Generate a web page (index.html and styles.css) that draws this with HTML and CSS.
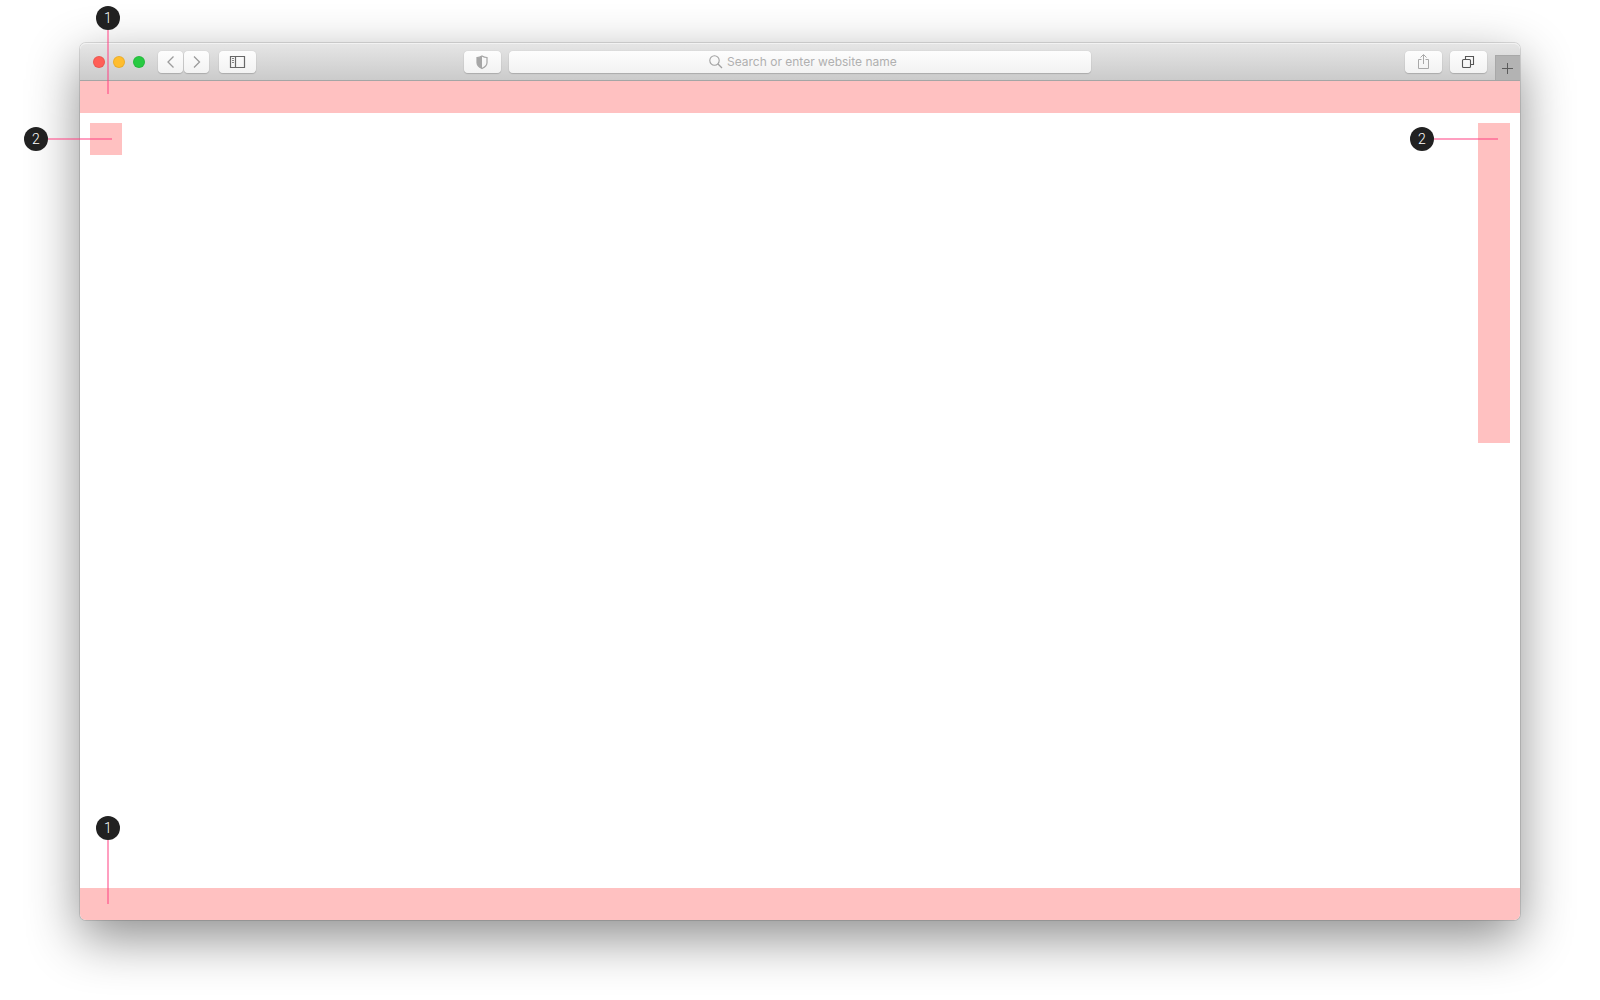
FILE: index.html
```html
<!DOCTYPE html>
<html lang="en">
<head>
<meta charset="utf-8">
<meta name="viewport" content="width=device-width, initial-scale=1">
<title>Browser layout regions</title>
<link rel="stylesheet" href="styles.css">
</head>
<body>
<main class="window">
  <header class="toolbar">
    <div class="side">
      <div class="lights"><span class="light close"></span><span class="light minimize"></span><span class="light zoom"></span></div>
      <div class="nav">
        <button class="btn nav-btn" type="button" aria-label="Back"><svg width="25" height="22" viewBox="0 0 25 22"><path d="M15.500 5.500 10 11l5.500 5.500" stroke="#9b9b9b" stroke-width="1.300"/></svg></button>
        <button class="btn nav-btn" type="button" aria-label="Forward"><svg width="25" height="22" viewBox="0 0 25 22"><path d="M10 5.500 15.500 11 10 16.500" stroke="#9b9b9b" stroke-width="1.300"/></svg></button>
      </div>
      <button class="btn" type="button" aria-label="Show sidebar"><svg width="37" height="22" viewBox="0 0 37 22"><path d="M11.500 5.500h14v11h-14zM16.500 5.500v11" stroke="#686868" stroke-width="1.200"/><path d="M13 7.500h2M13 9.500h2M13 11.500h2" stroke="#858585"/></svg></button>
      <button class="btn shield" type="button" aria-label="Privacy report"><svg width="37" height="22" viewBox="0 0 37 22"><path d="M18 5c1.500 1 3.200 1.500 5 1.500v5.200c0 2.700-2 4.300-5 5.800-3-1.500-5-3.100-5-5.800V6.500c1.800 0 3.500-.5 5-1.500z" stroke="#a6a6a6" stroke-width="1.200"/><path d="M18 5v12.500c-3-1.500-5-3.100-5-5.800V6.500c1.800 0 3.500-.5 5-1.500z" fill="#a6a6a6"/></svg></button>
    </div>
    <label class="address">
      <svg width="14" height="14" viewBox="0 0 14 14"><circle cx="5.500" cy="5.500" r="4.700" stroke="#a0a0a0" stroke-width="1.100"/><path d="m9 9 4 4" stroke="#a0a0a0" stroke-width="1.300"/></svg>
      <input class="address-input" type="text" placeholder="Search or enter website name" aria-label="Address">
    </label>
    <div class="side actions">
      <button class="btn" type="button" aria-label="Share"><svg width="37" height="22" viewBox="0 0 37 22"><path d="M16.500 8.500h-3v9h10v-9h-3M18.500 13V4M15.500 6.500l3-3 3 3" stroke="#a9a9a9"/></svg></button>
      <button class="btn" type="button" aria-label="Show all tabs"><svg width="37" height="22" viewBox="0 0 37 22"><path d="M13.500 8.500h6a1 1 0 0 1 1 1v6a1 1 0 0 1-1 1h-6a1 1 0 0 1-1-1v-6a1 1 0 0 1 1-1zM15.500 8.500v-3h8v8h-3" stroke="#555" stroke-width="1.100"/></svg></button>
      <button class="new-tab" type="button" aria-label="New tab"><svg width="25" height="25" viewBox="0 0 25 25"><path d="M12.500 8v11M7 13.500h11" stroke="#5c5c5c"/></svg></button>
    </div>
  </header>
  <div class="band"></div>
  <section class="content">
    <div class="region square"></div>
    <div class="region rail"></div>
  </section>
  <div class="band bottom"></div>

  <div class="marker vertical at-top"><span class="badge">1</span><span class="line"></span></div>
  <div class="marker at-left"><span class="badge">2</span><span class="line"></span></div>
  <div class="marker at-right"><span class="badge">2</span><span class="line"></span></div>
  <div class="marker vertical at-bottom"><span class="badge">1</span><span class="line"></span></div>
</main>
</body>
</html>
```
FILE: styles.css
```css
* { box-sizing: border-box; }
body {
  margin: 0;
  min-height: 100vh;
  padding: 43px 80px 80px;
  display: flex;
  flex-direction: column;
  background: #fff;
  font-family: Inter, "Liberation Sans", sans-serif;
}
svg { display: block; fill: none; flex: none; }
.window {
  position: relative;
  flex: 1;
  display: flex;
  flex-direction: column;
  background: #fff;
  border-radius: 6px;
  box-shadow: 0 0 0 1px rgba(0, 0, 0, .12), 0 18px 52px rgba(0, 0, 0, .45);
}
.toolbar {
  height: 38px;
  padding-top: 1px;
  display: grid;
  grid-template-columns: 1fr minmax(0, 582px) 1fr;
  align-items: center;
  background: linear-gradient(#e6e6e6, #cbcbcb);
  border-bottom: 1px solid #a5a5a5;
  border-radius: 6px 6px 0 0;
  box-shadow: inset 0 1px #f2f2f2;
}
.side { display: flex; align-items: center; height: 36px; padding-left: 13px; }
.lights { display: flex; gap: 8px; margin-right: 13px; }
.light { width: 12px; height: 12px; border-radius: 50%; border: 1px solid rgba(0, 0, 0, .08); }
.close { background: #ff5f57; }
.minimize { background: #ffbd2e; }
.zoom { background: #28ca42; }
.nav { display: flex; gap: 1px; margin-right: 10px; }
.btn {
  width: 37px;
  height: 22px;
  padding: 0;
  border: 0;
  border-radius: 4px;
  background: linear-gradient(#fdfdfd, #f2f2f2);
  box-shadow: 0 0 1px rgba(0, 0, 0, .2), 0 1px 1px rgba(0, 0, 0, .16);
}
.nav-btn { width: 25px; }
.shield { margin: 0 8px 0 auto; }
.address {
  height: 22px;
  display: flex;
  align-items: center;
  justify-content: center;
  gap: 4px;
  padding-left: 6px;
  border-radius: 4px;
  background: linear-gradient(#fdfdfd, #f2f2f2);
  box-shadow: 0 0 1px rgba(0, 0, 0, .2), 0 1px 1px rgba(0, 0, 0, .16);
}
.address-input {
  width: 170px;
  height: 20px;
  padding: 0;
  border: 0;
  outline: 0;
  background: none;
  color: #555;
  font: 12px/20px Inter, "Liberation Sans", sans-serif;
}
.address-input::placeholder { color: #b0b0b0; opacity: 1; }
.actions { justify-content: flex-end; gap: 8px; padding: 0; }
.new-tab {
  width: 25px;
  height: 25px;
  padding: 0;
  border: 0;
  align-self: flex-end;
  background: #b3b3b3;
  box-shadow: inset 1px 1px #a8a8a8;
}
.band { height: 32px; background: #ffc1c1; }
.bottom { border-radius: 0 0 6px 6px; }
.content {
  flex: 1;
  min-height: 340px;
  padding: 10px;
  display: flex;
  justify-content: space-between;
  align-items: flex-start;
}
.region { width: 32px; background: #ffc1c1; }
.square { height: 32px; }
.rail { height: 320px; }
.marker { position: absolute; display: flex; align-items: center; }
.vertical { flex-direction: column; }
.badge {
  width: 24px;
  height: 24px;
  border-radius: 50%;
  background: #212121;
  color: #fff;
  font: 300 14px/24px Roboto, sans-serif;
  text-align: center;
}
.line { width: 64px; height: 2px; background: rgba(255, 64, 129, .5); }
.vertical .line { width: 2px; height: 64px; }
.at-top { left: 16px; top: -37px; }
.at-left { left: -56px; top: 84px; }
.at-right { right: 22px; top: 84px; }
.at-bottom { left: 16px; bottom: 16px; }
```
